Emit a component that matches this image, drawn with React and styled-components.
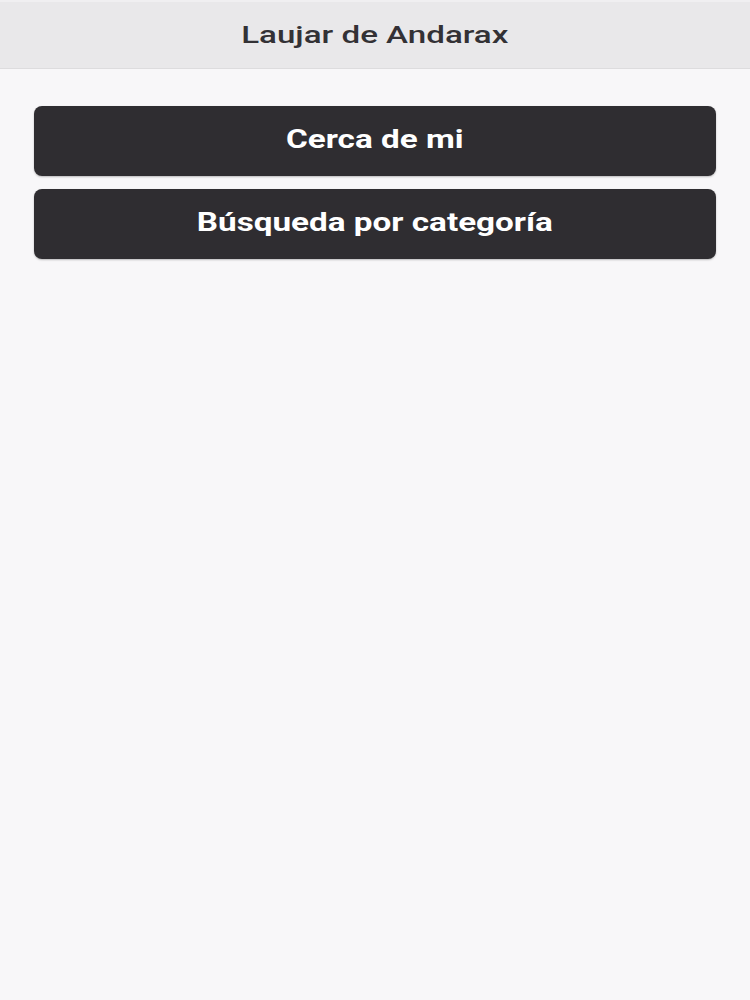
import React from "react";
import styled, { createGlobalStyle } from "styled-components";

const Global = createGlobalStyle`
  html, body { margin: 0; padding: 0; background: #f8f7f9; }
  body { font-family: Roboto, "Noto Sans", Arial, sans-serif; }
`;

const Page = styled.div`
  min-height: 1000px;
  background: #f8f7f9;
  display: flex;
  flex-direction: column;
`;

const Header = styled.header`
  background: #e9e8ea;
  border-top: 2px solid #f0eff1;
  border-bottom: 1px solid #dddcde;
  box-sizing: border-box;
  height: 69px;
  display: flex;
  align-items: center;
  justify-content: center;
`;

const Title = styled.h1`
  margin: 0;
  font-size: 24px;
  font-weight: 500;
  color: #333135;
  line-height: 1;
`;

const Stretch = styled.span`
  display: inline-block;
  transform: scaleX(${(p) => p.$x || 1.3});
  transform-origin: center;
  white-space: nowrap;
`;

const Content = styled.main`
  padding: 37px 34px 0;
  display: flex;
  flex-direction: column;
  gap: 13px;
`;

const Button = styled.button`
  height: 70px;
  padding: 0 0 3px;
  border: none;
  border-radius: 8px;
  background: #2f2d31;
  color: #ffffff;
  font-family: Roboto, "Noto Sans", Arial, sans-serif;
  font-size: 25px;
  font-weight: 700;
  line-height: 1;
  box-shadow: 0 1px 2px rgba(0, 0, 0, 0.25);
  cursor: pointer;
`;

export default function App() {
  return (
    <Page>
      <Global />
      <Header>
        <Title>
          <Stretch $x={1.38}>Laujar de Andarax</Stretch>
        </Title>
      </Header>
      <Content>
        <Button>
          <Stretch $x={1.33}>Cerca de mi</Stretch>
        </Button>
        <Button>
          <Stretch $x={1.33}>Búsqueda por categoría</Stretch>
        </Button>
      </Content>
    </Page>
  );
}
